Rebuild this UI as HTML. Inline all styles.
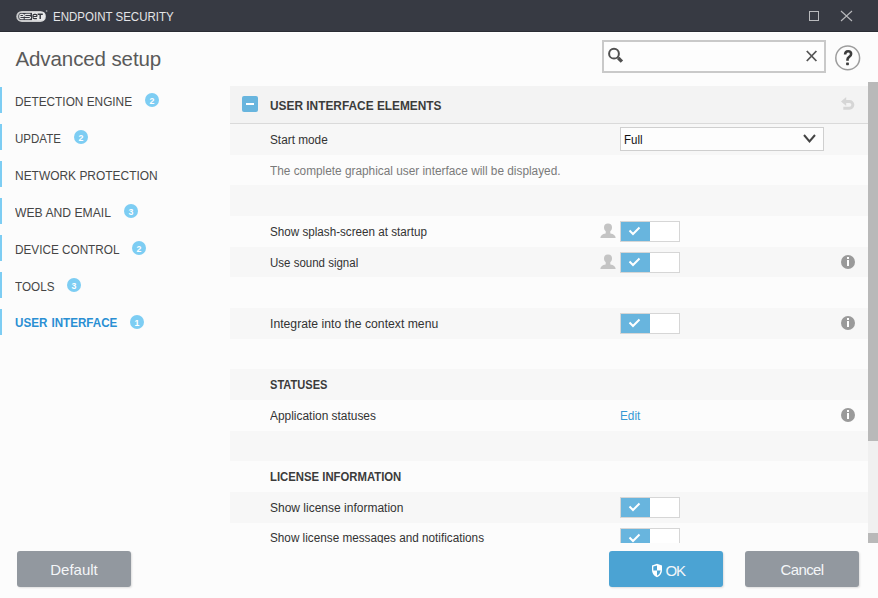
<!DOCTYPE html>
<html><head><meta charset="utf-8">
<style>
*{margin:0;padding:0;box-sizing:border-box}
html,body{width:878px;height:598px;overflow:hidden;background:#fcfcfc;font-family:"Liberation Sans",sans-serif}
body{position:relative}
.a{position:absolute;white-space:nowrap}
#title{left:0;top:0;width:878px;height:32px;background:#373a43;border-bottom:1px solid #2a2d34}
#tline{left:0;top:32px;width:878px;height:1px;background:#fff}
.t{line-height:1}
#ttl{left:53px;top:10.5px;color:#e4e5e7;font-size:12.5px;transform:scaleX(0.921);transform-origin:0 0}
#h1{left:15.5px;top:49px;font-size:20.5px;color:#5a5a5a;letter-spacing:-0.1px}
.bar{left:0;width:2px;height:26px;background:#7dcdf3}
.nl{left:15px;font-size:12.5px;color:#454545;line-height:1}
.badge{width:14px;height:14px;border-radius:7px;background:#7dcdf3;color:#fff;font-size:8.8px;font-weight:bold;text-align:center;line-height:16.5px}
.rl{left:270px;font-size:12.5px;color:#333;line-height:1}
.sec{font-weight:bold;color:#3b3b3b}
.rowg{left:230px;width:638px;background:#f7f7f7}
.tog{left:620px;width:60px;height:21px;border:1px solid #d6d6d6;background:#fff}
.tog i{position:absolute;left:0;top:0;width:29px;height:19px;background:#68b5de}
.tog svg{position:absolute;left:7px;top:4px}
.info{left:841px;width:14px;height:14px;border-radius:7px;background:#9a9a9a}
.info:before{content:"";position:absolute;left:6px;top:2px;width:2px;height:2px;background:#fff}
.info:after{content:"";position:absolute;left:6px;top:5px;width:2px;height:6px;background:#fff}
.person{left:600px}
.btn{height:36px;border-radius:3px;color:#f4f6f8;font-size:15px;text-align:center;line-height:38px;box-shadow:1px 1px 2px rgba(0,0,0,0.12)}
</style></head><body>
<div id="title" class="a">
  <svg class="a" style="left:0;top:0" width="50" height="30" viewBox="0 0 50 30">
    <rect x="16.3" y="10.9" width="29.7" height="11" rx="5.5" fill="#c9cacc"/>
    <path d="M32 12.9 V19.9 H21 Q18.3 19.9 18.3 16.4 Q18.3 12.9 21 12.9 Z" fill="#373a43"/>
    <path d="M32 12.3 H43 Q45 12.3 45 16.4 Q45 20.5 43 20.5 H32 Z" fill="#e9eaeb"/>
    <g fill="none" stroke-width="1.2">
      <path d="M23.7 16.6 V15.5 Q23.7 14.3 22.4 14.3 H21 Q19.8 14.3 19.8 15.5 V17.5 Q19.8 18.7 21 18.7 H23.7 M19.8 16.5 H23.7" stroke="#e6e7e8"/>
      <path d="M30.5 14.3 H25.9 Q24.7 14.3 24.7 15.4 Q24.7 16.5 25.9 16.5 H29.3 Q30.5 16.5 30.5 17.6 Q30.5 18.7 29.3 18.7 H24.7" stroke="#e6e7e8"/>
      <path d="M36.9 16.6 V15.5 Q36.9 14.3 35.6 14.3 H34.2 Q33 14.3 33 15.5 V17.5 Q33 18.7 34.2 18.7 H36.9 M33 16.5 H36.9" stroke="#33363d"/>
      <path d="M37.6 14.3 H42.8 M40.2 14.3 V18.9" stroke="#33363d" stroke-width="1.4"/>
    </g>
    <circle cx="46.6" cy="11" r="0.9" fill="#8e9094"/>
  </svg>
  <div id="ttl" class="a t">ENDPOINT SECURITY</div>
  <svg class="a" style="left:808px;top:10px" width="12" height="12"><rect x="1.5" y="1.5" width="9" height="9" fill="none" stroke="#b9babd" stroke-width="1"/></svg>
  <svg class="a" style="left:840px;top:10px" width="13" height="12"><path d="M1 1 L12 11 M12 1 L1 11" stroke="#b9babd" stroke-width="1.1"/></svg>
</div>
<div id="tline" class="a"></div>
<div id="h1" class="a t">Advanced setup</div>

<!-- search -->
<div class="a" style="left:602px;top:40px;width:224px;height:33px;border:2px solid #c9c9c9;background:#fdfdfd"></div>
<svg class="a" style="left:606px;top:44px" width="20" height="22" viewBox="0 0 20 22">
  <circle cx="8" cy="9.7" r="4.9" fill="none" stroke="#505050" stroke-width="2"/>
  <path d="M11.3 13 L12.3 14" stroke="#505050" stroke-width="2"/>
  <path d="M12.3 14 L15.9 17.6" stroke="#505050" stroke-width="3.4"/>
</svg>
<svg class="a" style="left:804px;top:48px" width="15" height="15"><path d="M2.8 3 L12.4 13 M12.4 3 L2.8 13" stroke="#555" stroke-width="1.8"/></svg>
<svg class="a" style="left:833px;top:43px" width="30" height="30">
  <circle cx="14.7" cy="14.9" r="11.9" fill="none" stroke="#9d9d9d" stroke-width="1.5"/>
  <path d="M12.1 11.5 Q12.1 8.3 15.1 8.3 Q18.1 8.3 18.1 11 Q18.1 12.8 16.2 13.9 Q14.5 15 14.5 16.6 V17.8" fill="none" stroke="#3c3c3c" stroke-width="2.6"/><rect x="13.1" y="19.4" width="2.8" height="2.8" rx="0.6" fill="#3c3c3c"/>
</svg>

<!-- sidebar -->
<div class="a bar" style="top:87px"></div><div class="a nl" style="top:96px;transform:scaleX(0.947);transform-origin:0 0">DETECTION ENGINE</div><div class="a badge" style="left:145px;top:93px">2</div>
<div class="a bar" style="top:124px"></div><div class="a nl" style="top:133px;transform:scaleX(0.922);transform-origin:0 0">UPDATE</div><div class="a badge" style="left:74px;top:130px">2</div>
<div class="a bar" style="top:161px"></div><div class="a nl" style="top:170px;transform:scaleX(0.956);transform-origin:0 0">NETWORK PROTECTION</div>
<div class="a bar" style="top:198px"></div><div class="a nl" style="top:207px;transform:scaleX(0.973);transform-origin:0 0">WEB AND EMAIL</div><div class="a badge" style="left:124px;top:204px">3</div>
<div class="a bar" style="top:235px"></div><div class="a nl" style="top:244px;transform:scaleX(0.940);transform-origin:0 0">DEVICE CONTROL</div><div class="a badge" style="left:132px;top:241px">2</div>
<div class="a bar" style="top:272px"></div><div class="a nl" style="top:281px;transform:scaleX(0.936);transform-origin:0 0">TOOLS</div><div class="a badge" style="left:67px;top:278px">3</div>
<div class="a bar" style="top:309px"></div><div class="a nl" style="top:316.4px;left:15.3px;font-size:13.7px;letter-spacing:0px;word-spacing:1px;color:#2a8fd3;font-weight:bold;transform:scaleX(0.85);transform-origin:0 0">USER INTERFACE</div><div class="a badge" style="left:130px;top:315px">1</div>

<!-- panel -->
<div class="a" style="left:230px;top:86px;width:638px;height:37px;background:#f3f3f3"></div>
<div class="a" style="left:230px;top:123px;width:638px;height:1px;background:#dadada"></div>
<div class="a" style="left:242px;top:96px;width:16px;height:16px;border-radius:2px;background:#68b5de"></div>
<div class="a" style="left:246px;top:103px;width:8px;height:2px;background:#fff"></div>
<div class="a rl sec" style="top:100px;transform:scaleX(0.950);transform-origin:0 0">USER INTERFACE ELEMENTS</div>
<svg class="a" style="left:840px;top:96px" width="16" height="15" viewBox="0 0 16 15">
  <path d="M1 5.5 L6.2 1 L6.2 10 Z" fill="#d6d6d6"/>
  <path d="M5 5.5 H9.5 A3.3 3.3 0 0 1 9.5 12.2 H3.3" fill="none" stroke="#d6d6d6" stroke-width="3"/>
</svg>

<div class="a rowg" style="top:124.00px;height:30.67px"></div>
<div class="a rowg" style="top:185.33px;height:30.67px"></div>
<div class="a rowg" style="top:246.67px;height:30.67px"></div>
<div class="a rowg" style="top:308.00px;height:30.67px"></div>
<div class="a rowg" style="top:369.33px;height:30.67px"></div>
<div class="a rowg" style="top:430.67px;height:30.67px"></div>
<div class="a rowg" style="top:492.00px;height:30.67px"></div>

<div class="a rl" style="top:134px;transform:scaleX(0.944);transform-origin:0 0">Start mode</div>
<div class="a" style="left:620px;top:127px;width:204px;height:24px;border:1px solid #cfcfcf;background:#fdfdfd"></div>
<div class="a t" style="left:624px;top:133.5px;font-size:12.5px;color:#111;transform:scaleX(0.920);transform-origin:0 0">Full</div>
<svg class="a" style="left:802px;top:133px" width="15" height="11"><path d="M2 2 L7.5 8.5 L13 2" fill="none" stroke="#444" stroke-width="2"/></svg>

<div class="a rl" style="top:164.5px;color:#7a7a7a;transform:scaleX(0.946);transform-origin:0 0">The complete graphical user interface will be displayed.</div>

<div class="a rl" style="top:225.5px;transform:scaleX(0.933);transform-origin:0 0">Show splash-screen at startup</div>
<svg class="a person" style="top:223px" width="17" height="16" viewBox="0 0 17 16"><circle cx="8" cy="4.6" r="4" fill="#c4c4c4"/><path d="M0.3 15 Q0.8 10.9 5.5 10.4 H10.5 Q15.2 10.9 15.7 15 Z" fill="#c4c4c4"/><rect x="5.7" y="7" width="4.6" height="4" fill="#c4c4c4"/></svg>
<div class="a tog" style="top:221px"><i></i><svg width="13" height="10"><path d="M1.5 4.5 L5 8 L11.5 1.5" fill="none" stroke="#fff" stroke-width="2"/></svg></div>

<div class="a rl" style="top:256.5px;transform:scaleX(0.920);transform-origin:0 0">Use sound signal</div>
<svg class="a person" style="top:254px" width="17" height="16" viewBox="0 0 17 16"><circle cx="8" cy="4.6" r="4" fill="#c4c4c4"/><path d="M0.3 15 Q0.8 10.9 5.5 10.4 H10.5 Q15.2 10.9 15.7 15 Z" fill="#c4c4c4"/><rect x="5.7" y="7" width="4.6" height="4" fill="#c4c4c4"/></svg>
<div class="a tog" style="top:252px"><i></i><svg width="13" height="10"><path d="M1.5 4.5 L5 8 L11.5 1.5" fill="none" stroke="#fff" stroke-width="2"/></svg></div>
<div class="a info" style="top:255px"></div>

<div class="a rl" style="top:317.5px;transform:scaleX(0.976);transform-origin:0 0">Integrate into the context menu</div>
<div class="a tog" style="top:313px"><i></i><svg width="13" height="10"><path d="M1.5 4.5 L5 8 L11.5 1.5" fill="none" stroke="#fff" stroke-width="2"/></svg></div>
<div class="a info" style="top:316px"></div>

<div class="a rl sec" style="top:378.5px;transform:scaleX(0.886);transform-origin:0 0">STATUSES</div>
<div class="a rl" style="top:409.5px;transform:scaleX(0.953);transform-origin:0 0">Application statuses</div>
<div class="a t" style="left:620px;top:409.5px;font-size:12.5px;color:#3598d4;transform:scaleX(0.943);transform-origin:0 0">Edit</div>
<div class="a info" style="top:408px"></div>

<div class="a rl sec" style="top:470.5px;transform:scaleX(0.906);transform-origin:0 0">LICENSE INFORMATION</div>
<div class="a rl" style="top:501.5px;transform:scaleX(0.960);transform-origin:0 0">Show license information</div>
<div class="a tog" style="top:497px"><i></i><svg width="13" height="10"><path d="M1.5 4.5 L5 8 L11.5 1.5" fill="none" stroke="#fff" stroke-width="2"/></svg></div>

<div class="a" style="left:230px;top:522px;width:638px;height:21px;overflow:hidden">
  <div class="a rl" style="left:40px;top:10.3px;transform:scaleX(0.939);transform-origin:0 0">Show license messages and notifications</div>
  <div class="a tog" style="left:390px;top:6px"><i></i><svg width="13" height="10"><path d="M1.5 4.5 L5 8 L11.5 1.5" fill="none" stroke="#fff" stroke-width="2"/></svg></div>
</div>

<!-- scrollbar -->
<div class="a" style="left:868px;top:82px;width:10px;height:461px;background:#f0f0f0"></div>
<div class="a" style="left:868px;top:82px;width:10px;height:359px;background:#b9b9b9"></div>
<div class="a" style="left:868px;top:533px;width:10px;height:10px;background:#b9b9b9"></div>

<!-- buttons -->
<div class="a btn" style="left:17px;top:551px;width:114px;background:#92989f">Default</div>
<div class="a btn" style="left:609px;top:551px;width:114px;background:#4ba3d3"></div>
<svg class="a" style="left:651px;top:563px" width="12" height="15" viewBox="0 0 12 15"><path d="M6 0.7 L11 2.5 V7 Q11 11.8 6 14.3 Q1 11.8 1 7 V2.5 Z" fill="#fff"/><path d="M6 2.4 V7.6 H9.7 Q9.3 11 6 12.8 Z" fill="#4ba3d3"/><path d="M6 7.6 H2.3 V3.6 L6 2.4 Z" fill="#4ba3d3"/></svg>
<div class="a t" style="left:665.5px;top:563px;font-size:15px;color:#f4f6f8;letter-spacing:-1.2px">OK</div>
<div class="a btn" style="left:745px;top:551px;width:114px;background:#92989f;letter-spacing:-0.6px">Cancel</div>
</body></html>
